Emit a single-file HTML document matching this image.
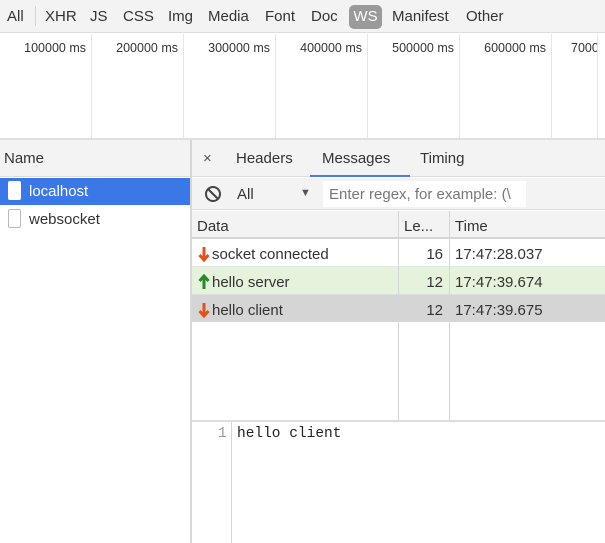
<!DOCTYPE html>
<html><head><style>
*{margin:0;padding:0;box-sizing:border-box}
body{width:605px;height:543px;overflow:hidden;background:#fff;font-family:"Liberation Sans",sans-serif;font-size:15px;color:#333;position:relative}
.a{position:absolute;white-space:nowrap}
.hl{position:absolute;background:#d6d6d6}
.t{position:absolute;top:41px;width:90px;text-align:right;font-size:12.5px}
</style></head><body>
<!-- toolbar -->
<div class="a" style="left:0;top:0;width:605px;height:33px;background:#f3f3f3;border-bottom:1px solid #ddd"></div>
<div class="a" style="left:7px;top:8px">All</div>
<div class="hl" style="left:35px;top:6px;width:1px;height:20px"></div>
<div class="a" style="left:45px;top:8px">XHR</div>
<div class="a" style="left:90px;top:8px">JS</div>
<div class="a" style="left:123px;top:8px">CSS</div>
<div class="a" style="left:168px;top:8px">Img</div>
<div class="a" style="left:208px;top:8px">Media</div>
<div class="a" style="left:265px;top:8px">Font</div>
<div class="a" style="left:311px;top:8px">Doc</div>
<div class="a" style="left:349px;top:5px;width:33px;height:24px;background:#9a9a9a;border-radius:5px;color:#fff;text-align:center;line-height:24px">WS</div>
<div class="a" style="left:392px;top:8px">Manifest</div>
<div class="a" style="left:466px;top:8px">Other</div>
<!-- timeline -->
<div class="t" style="left:-4px">100000 ms</div>
<div class="t" style="left:88px">200000 ms</div>
<div class="t" style="left:180px">300000 ms</div>
<div class="t" style="left:272px">400000 ms</div>
<div class="t" style="left:364px">500000 ms</div>
<div class="t" style="left:456px">600000 ms</div>
<div class="a" style="left:571px;top:41px;width:26px;overflow:hidden;font-size:12.5px">700000</div>
<div class="hl" style="left:91px;top:34px;width:1px;height:104px;background:#e6e6e6"></div>
<div class="hl" style="left:183px;top:34px;width:1px;height:104px;background:#e6e6e6"></div>
<div class="hl" style="left:275px;top:34px;width:1px;height:104px;background:#e6e6e6"></div>
<div class="hl" style="left:367px;top:34px;width:1px;height:104px;background:#e6e6e6"></div>
<div class="hl" style="left:459px;top:34px;width:1px;height:104px;background:#e6e6e6"></div>
<div class="hl" style="left:551px;top:34px;width:1px;height:104px;background:#e6e6e6"></div>
<div class="hl" style="left:597px;top:34px;width:1px;height:104px;background:#e6e6e6"></div>
<div class="hl" style="left:0;top:138px;width:605px;height:2px;background:#e0e0e0"></div>
<!-- left panel -->
<div class="a" style="left:0;top:140px;width:190px;height:37px;background:#f3f3f3;border-bottom:1px solid #ddd"></div>
<div class="a" style="left:4px;top:150px">Name</div>
<div class="a" style="left:0;top:178px;width:190px;height:27px;background:#3b78e7"></div>
<div class="a" style="left:8px;top:181px;width:13px;height:19px;background:#fff;border-radius:2px"></div>
<div class="a" style="left:29px;top:183px;color:#fff">localhost</div>
<div class="a" style="left:8px;top:209px;width:13px;height:19px;background:#fff;border:1px solid #bbb;border-radius:2px"></div>
<div class="a" style="left:29px;top:211px">websocket</div>
<div class="hl" style="left:190px;top:140px;width:2px;height:403px"></div>
<!-- tabs -->
<div class="a" style="left:192px;top:140px;width:413px;height:37px;background:#f3f3f3;border-bottom:1px solid #ddd"></div>
<div class="a" style="left:203px;top:150px;color:#555">×</div>
<div class="a" style="left:236px;top:150px">Headers</div>
<div class="a" style="left:322px;top:150px">Messages</div>
<div class="a" style="left:420px;top:150px">Timing</div>
<div class="a" style="left:310px;top:175px;width:100px;height:2px;background:#4a7fe0"></div>
<!-- filter -->
<div class="a" style="left:192px;top:178px;width:413px;height:32px;background:#f3f3f3;border-bottom:1px solid #ddd"></div>
<svg class="a" style="left:204px;top:185px" width="18" height="18" viewBox="0 0 18 18"><circle cx="9" cy="9" r="7" fill="none" stroke="#444" stroke-width="2"/><path d="M4 4L14 14" stroke="#444" stroke-width="2"/></svg>
<div class="a" style="left:237px;top:186px">All</div>
<div class="a" style="left:300px;top:187px;font-size:11px;color:#555">▼</div>
<div class="a" style="left:323px;top:181px;width:203px;height:26px;background:#fff;overflow:hidden;color:#777;padding:5px 0 0 6px">Enter regex, for example: (\</div>
<!-- table header -->
<div class="a" style="left:192px;top:211px;width:413px;height:28px;background:#f3f3f3;border-bottom:2px solid #d6d6d6"></div>
<div class="a" style="left:197px;top:218px">Data</div>
<div class="a" style="left:404px;top:218px">Le...</div>
<div class="a" style="left:455px;top:218px">Time</div>
<!-- rows -->
<div class="a" style="left:192px;top:266px;width:413px;height:28px;background:#e5f3dd"></div>
<div class="a" style="left:192px;top:294px;width:413px;height:28px;background:#d5d5d5"></div>
<div class="hl" style="left:192px;top:266px;width:413px;height:1px;background:#e4e4e4"></div>
<div class="hl" style="left:192px;top:294px;width:413px;height:1px;background:#ddd"></div>
<div class="hl" style="left:398px;top:211px;width:1px;height:210px"></div>
<div class="hl" style="left:449px;top:211px;width:1px;height:210px"></div>
<svg class="a" style="left:198px;top:246px" width="12" height="16" viewBox="0 0 12 16"><path d="M6 1V13M1.5 9L6 14L10.5 9" fill="none" stroke="#e0521e" stroke-width="3"/></svg>
<div class="a" style="left:212px;top:246px">socket connected</div>
<svg class="a" style="left:198px;top:274px" width="12" height="16" viewBox="0 0 12 16"><path d="M6 15V3M1.5 7L6 2L10.5 7" fill="none" stroke="#2a8a2a" stroke-width="3"/></svg>
<div class="a" style="left:212px;top:274px">hello server</div>
<svg class="a" style="left:198px;top:302px" width="12" height="16" viewBox="0 0 12 16"><path d="M6 1V13M1.5 9L6 14L10.5 9" fill="none" stroke="#e0521e" stroke-width="3"/></svg>
<div class="a" style="left:212px;top:302px">hello client</div>
<div class="a" style="left:398px;top:246px;width:45px;text-align:right">16</div>
<div class="a" style="left:398px;top:274px;width:45px;text-align:right">12</div>
<div class="a" style="left:398px;top:302px;width:45px;text-align:right">12</div>
<div class="a" style="left:455px;top:246px">17:47:28.037</div>
<div class="a" style="left:455px;top:274px">17:47:39.674</div>
<div class="a" style="left:455px;top:302px">17:47:39.675</div>
<div class="hl" style="left:192px;top:320px;width:413px;height:2px"></div>
<div class="hl" style="left:192px;top:420px;width:413px;height:2px;background:#ddd"></div>
<!-- editor -->
<div class="hl" style="left:231px;top:422px;width:1px;height:121px"></div>
<div class="a" style="left:218px;top:426px;font-family:'Liberation Mono',monospace;font-size:14.5px;color:#999">1</div>
<div class="a" style="left:237px;top:426px;font-family:'Liberation Mono',monospace;font-size:14.5px;color:#222">hello client</div>
</body></html>
